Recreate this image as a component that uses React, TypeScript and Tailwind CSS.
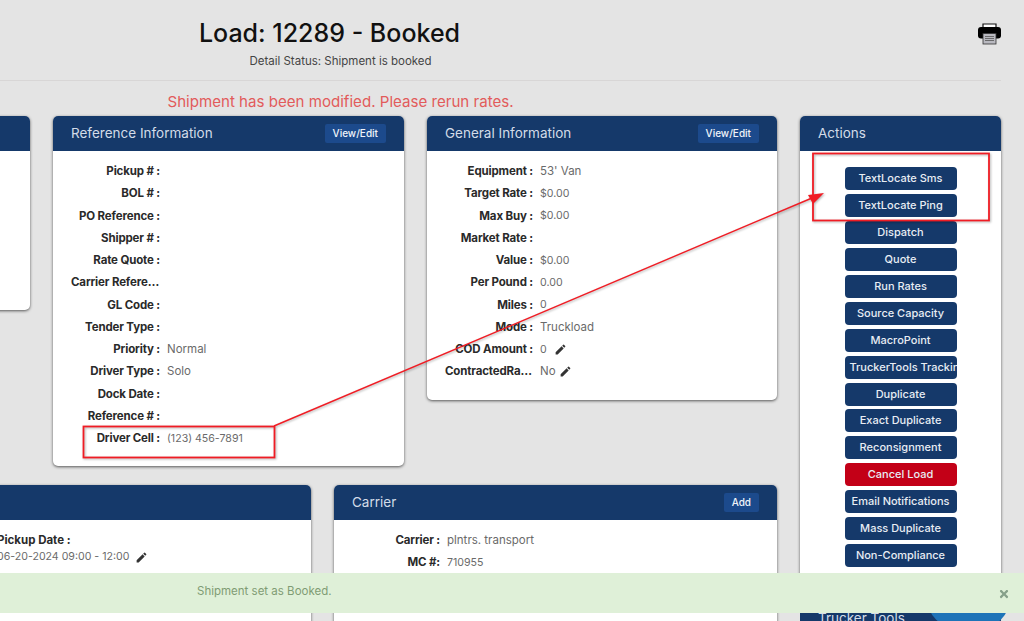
import { MdEdit } from "react-icons/md";
import { FaTimes } from "react-icons/fa";

const referenceRows = [
  { label: "Pickup # :" },
  { label: "BOL # :" },
  { label: "PO Reference :" },
  { label: "Shipper # :" },
  { label: "Rate Quote :" },
  { label: "Carrier Reference # :" },
  { label: "GL Code :" },
  { label: "Tender Type :" },
  { label: "Priority :", value: "Normal" },
  { label: "Driver Type :", value: "Solo" },
  { label: "Dock Date :" },
  { label: "Reference # :" },
  { label: "Driver Cell :", value: "(123) 456-7891", numeric: true },
];

const generalRows = [
  { label: "Equipment :", value: "53' Van" },
  { label: "Target Rate :", value: "$0.00", numeric: true },
  { label: "Max Buy :", value: "$0.00", numeric: true },
  { label: "Market Rate :" },
  { label: "Value :", value: "$0.00", numeric: true },
  { label: "Per Pound :", value: "0.00", numeric: true },
  { label: "Miles :", value: "0", numeric: true },
  { label: "Mode :", value: "Truckload" },
  { label: "COD Amount :", value: "0", numeric: true, edit: "ml-0" },
  { label: "ContractedRate :", value: "No", edit: "-ml-[4px]" },
];

const actions = [
  "TextLocate Sms",
  "TextLocate Ping",
  "Dispatch",
  "Quote",
  "Run Rates",
  "Source Capacity",
  "MacroPoint",
  "TruckerTools Tracking",
  "Duplicate",
  "Exact Duplicate",
  "Reconsignment",
  "Cancel Load",
  "Email Notifications",
  "Mass Duplicate",
  "Non-Compliance",
];

type Row = { label: string; value?: string; edit?: string; numeric?: boolean };

const Header = ({ title, button }: { title: string; button?: string }) => (
  <div className="flex h-[35px] items-center justify-between rounded-t-[5px] bg-[#15396a] px-[18px]">
    <span className="text-[13.5px] text-[#d3dce8]">{title}</span>
    {button && (
      <span className="flex h-[19px] items-center rounded-[2px] bg-[#1c4a8c] px-[8px] text-[10px] font-medium text-[#f0f4fa]">
        {button}
      </span>
    )}
  </div>
);

const InfoRow = ({ label, value, edit, numeric, labelWidth = "w-[89px]" }: Row & { labelWidth?: string }) => (
  <div className="flex h-[22.25px] items-center gap-[7px] text-[11.5px]">
    <span className={`${labelWidth} truncate text-right font-bold tracking-[-0.15px] text-[#2a2a2a]`}>{label}</span>
    <span className={numeric ? "text-[10.6px] text-[#6a6a6a]" : "text-[#6a6a6a]"}>{value}</span>
    {edit && <MdEdit className={`${edit} text-[13px] text-[#333333]`} />}
  </div>
);

const App = () => {
  return (
    <div className="relative h-[621px] w-[1024px] overflow-hidden bg-[#e4e4e4] font-['Inter','Liberation_Sans',sans-serif]">
      <div className="-ml-[320px] w-[1321px]">
        <div className="flex h-[81px] border-b border-[#d8d6d6]">
          <div className="w-[1299px] pt-[15px] text-center">
            <h1 className="text-[25px] font-medium leading-[36px] text-[#111111]">Load: 12289 - Booked</h1>
            <p className="ml-[22px] mt-[1px] text-[11.5px] leading-[18px] text-[#444444]">
              Detail Status: Shipment is booked
            </p>
          </div>
          <svg width="23" height="22" viewBox="0 0 23 22" className="mt-[23px] -ml-[1px]">
            <path d="M5 9V1h13v8z" fill="#fff" stroke="#111" strokeWidth="1.2" />
            <rect x="0" y="4" width="23" height="11.5" rx="3" fill="#000" />
            <rect x="5" y="10.5" width="13" height="10.5" fill="#b9b9c0" stroke="#333" strokeWidth="0.8" />
            <path d="M7 13.5h9M7 15.5h9M7 17.5h9" stroke="#555" strokeWidth="0.8" />
          </svg>
        </div>

        <p className="mt-[11px] h-[24px] text-center text-[15.1px] leading-[20px] text-[#e25b5b]">
          Shipment has been modified. Please rerun rates.
        </p>

        <div className="flex gap-[23px]">
          <div className="w-[1097px]">
            <div className="flex items-start gap-[23px]">
              <div className="h-[194px] w-[350px] rounded-[5px] bg-white shadow-[0_1px_3px_#555]">
                <Header title="" />
              </div>
              <div className="h-[350px] w-[351px] rounded-[5px] bg-white shadow-[0_1px_3px_#555]">
                <Header title="Reference Information" button="View/Edit" />
                <div className="pl-[18px] pt-[9.5px]">
                  {referenceRows.map((row) => (
                    <InfoRow key={row.label} {...row} />
                  ))}
                </div>
              </div>
              <div className="h-[284px] w-[350px] rounded-[5px] bg-white shadow-[0_1px_3px_#555]">
                <Header title="General Information" button="View/Edit" />
                <div className="pl-[18px] pt-[9.5px]">
                  {generalRows.map((row) => (
                    <InfoRow key={row.label} labelWidth="w-[88px]" {...row} />
                  ))}
                </div>
              </div>
            </div>

            <div className="mt-[19px] flex items-start gap-[23px]">
              <div className="h-[200px] w-[631px] rounded-[5px] bg-white shadow-[0_1px_3px_#555]">
                <Header title="" />
                <div className="pl-[317px] pt-[11px] text-[11.5px]">
                  <p className="font-bold leading-[18px] text-[#2a2a2a]">Pickup Date :</p>
                  <div className="flex items-center gap-[6px] text-[10.6px] leading-[16px] text-[#6a6a6a]">
                    06-20-2024 09:00 - 12:00
                    <MdEdit className="text-[13px] text-[#333333]" />
                  </div>
                </div>
              </div>
              <div className="h-[200px] w-[443px] rounded-[5px] bg-white shadow-[0_1px_3px_#555]">
                <Header title="Carrier" button="Add" />
                <div className="pl-[18px] pt-[9.5px]">
                  <InfoRow label="Carrier :" value="plntrs. transport" labelWidth="w-[88px]" />
                  <InfoRow label="MC #:" value="710955" numeric labelWidth="w-[88px]" />
                </div>
              </div>
            </div>
          </div>

          <div className="w-[201px]">
            <div className="h-[481px] rounded-[5px] bg-white shadow-[0_1px_3px_#555]">
              <Header title="Actions" />
              <div className="flex flex-col items-center gap-[3.95px] pt-[16px]">
                {actions.map((action) => (
                  <div
                    key={action}
                    className={`h-[23px] w-[112px] overflow-hidden whitespace-nowrap rounded-[4px] px-[5px] text-center text-[11px] font-medium leading-[22px] text-[#e8edf4] ${
                      action === "Cancel Load" ? "bg-[#c30017]" : "bg-[#15396a]"
                    }`}
                  >
                    {action}
                  </div>
                ))}
              </div>
            </div>
            <div className="relative mt-[9px] h-[60px] rounded-t-[5px] bg-[#15396a] pl-[18px] pt-[2px] text-[13.5px] text-[#d3dce8]">
              Trucker Tools
              <div className="absolute right-[-9px] top-[-20px] h-[42px] w-[83px] rounded-b-[30px] bg-[#1e73b8]" />
            </div>
          </div>
        </div>
      </div>

      <div className="absolute left-0 right-0 top-[573px] flex h-[40px] items-center justify-between bg-[#dff0d8] pb-[2px] pl-[197px] pr-[14px] text-[11.5px] text-[#7f9c74]">
        Shipment set as Booked.
        <FaTimes className="mt-[3px] text-[12px] text-[#86a08a]" />
      </div>

      <svg width="1024" height="621" className="pointer-events-none absolute left-0 top-0 drop-shadow-[1px_1px_1px_rgba(0,0,0,0.3)]">
        <g fill="none" stroke="#f01c24">
          <rect x="83.5" y="426.5" width="191" height="31" strokeWidth="1.8" />
          <rect x="813" y="153.5" width="176" height="67" strokeWidth="1.8" />
          <path d="M274 426 L812 198" strokeWidth="1.4" />
        </g>
        <path d="M824 193 L808 195 L813 204 Z" fill="#f01c24" />
      </svg>
    </div>
  );
};

export default App;
